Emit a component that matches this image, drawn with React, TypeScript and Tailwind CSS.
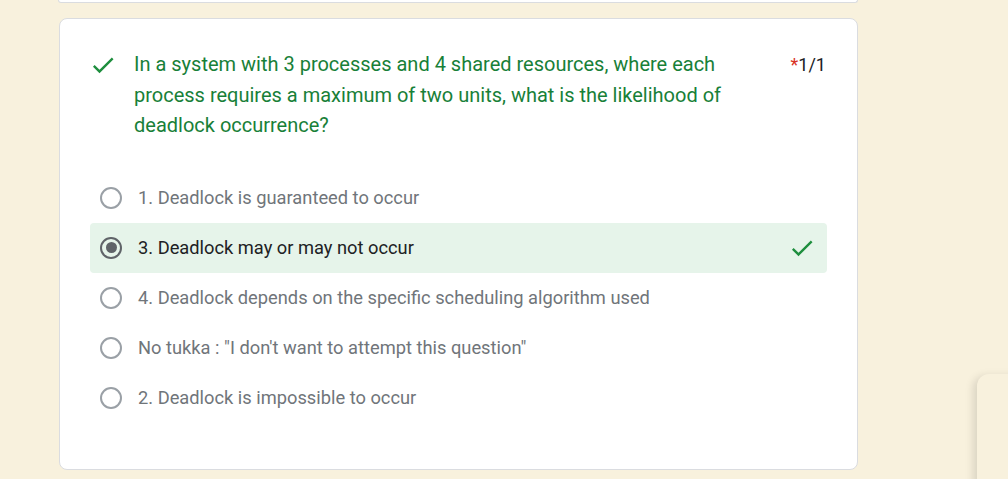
import React from "react";

const font = { fontFamily: "Roboto, 'Liberation Sans', sans-serif" };

function CheckIcon({ className }: { className?: string }) {
  return (
    <svg viewBox="0 0 24 24" className={className} fill="currentColor">
      <path d="M9 16.17L4.83 12l-1.42 1.41L9 19 21 7l-1.41-1.41z" />
    </svg>
  );
}

function Radio({ checked }: { checked?: boolean }) {
  return (
    <div
      className={
        "w-[22px] h-[22px] rounded-full border-2 flex items-center justify-center shrink-0 " +
        (checked ? "border-[#5f6368]" : "border-[#9aa0a6]")
      }
    >
      {checked && <div className="w-[11px] h-[11px] rounded-full bg-[#5f6368]" />}
    </div>
  );
}

const options = [
  { label: "1. Deadlock is guaranteed to occur" },
  { label: "3. Deadlock may or may not occur", checked: true, correct: true },
  { label: "4. Deadlock depends on the specific scheduling algorithm used" },
  { label: "No tukka : \"I don't want to attempt this question\"" },
  { label: "2. Deadlock is impossible to occur" },
];

export default function App() {
  return (
    <div className="relative w-[1008px] h-[479px] overflow-hidden bg-[#f8f1dd]" style={font}>
      <div className="pl-[58px]">
        <div className="w-[800px] h-[3px] bg-white border-x border-b border-[#dadce0] rounded-b-lg" />
        <div className="mt-[15px] ml-px w-[799px] bg-white border border-[#dadce0] rounded-lg pt-[30px] pb-[46px] px-[30px]">
          <div className="flex items-start -ml-px pr-[1px]">
            <CheckIcon className="w-7 h-7 mt-[2px] text-[#1e8e3e] shrink-0" />
            <div className="ml-[17px] flex-1">
              <div className="w-[600px] text-[20px] leading-[30.5px] text-[#188038]">
                In a system with 3 processes and 4 shared resources, where each process requires a maximum of two
                units, what is the likelihood of deadlock occurrence?
              </div>
            </div>
            <div className="text-[18px] leading-[30px] mt-px text-[#202124]">
              <span className="text-[#d93025]">*</span>1/1
            </div>
          </div>
          <div className="mt-[32px] flex flex-col">
            {options.map((o) => (
              <div
                key={o.label}
                className={
                  "h-[50px] flex items-center pl-[10px] pr-[11px] rounded " +
                  (o.correct ? "bg-[#e6f4ea]" : "")
                }
              >
                <Radio checked={o.checked} />
                <span
                  className={
                    "ml-[16px] flex-1 text-[18.3px] " + (o.checked ? "text-[#202124]" : "text-[#70757a]")
                  }
                >
                  {o.label}
                </span>
                {o.correct && <CheckIcon className="w-7 h-7 text-[#1e8e3e]" />}
              </div>
            ))}
          </div>
        </div>
      </div>
      <div className="absolute left-[977px] top-[374px] w-[60px] h-[140px] rounded-tl-xl bg-[#f8f1dd] shadow-[-4px_2px_8px_rgba(0,0,0,0.12)]" />
    </div>
  );
}
